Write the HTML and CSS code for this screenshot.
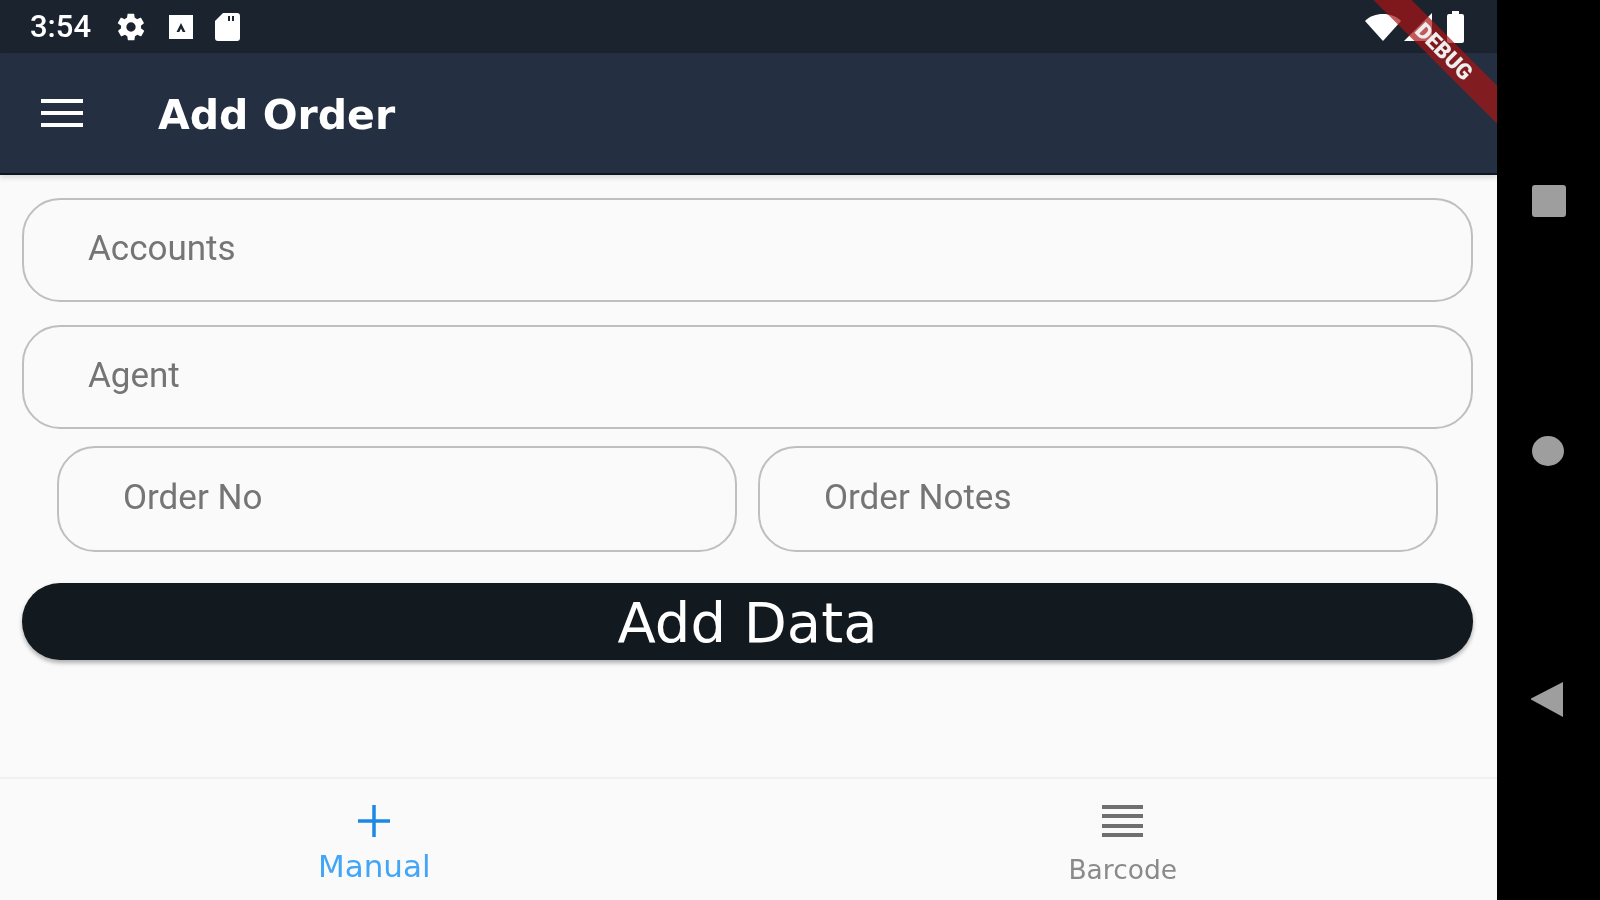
FILE: index.html
```html
<!DOCTYPE html>
<html lang="en">
  <head>
    <meta charset="utf-8">
    <link rel="stylesheet" href="styles.css">
    <title>Add Order</title>
  </head>
  <body>
    <div class="phone">
      <div class="screen">
        <div class="status">
          <span class="status__time">3:54</span>
          <svg class="status__gear" viewBox="0 0 24 24"><path fill="#fff" d="M19.4 13c.1-.3.1-.7.1-1s0-.7-.1-1l2.1-1.6c.2-.2.2-.4.1-.6l-2-3.5c-.1-.2-.4-.3-.6-.2l-2.5 1c-.5-.4-1.100-.7-1.700-1l-.4-2.600c0-.3-.2-.4-.5-.4h-4c-.3 0-.5.100-.5.400l-.4 2.600c-.6.300-1.200.6-1.700 1l-2.500-1c-.2-.1-.5 0-.6.2l-2 3.500c-.1.200-.1.400.1.600L4.600 11c-.1.300-.1.700-.1 1s0 .7.100 1l-2.100 1.600c-.2.200-.2.400-.1.600l2 3.500c.1.200.4.300.6.200l2.500-1c.5.400 1.100.7 1.700 1l.4 2.600c0 .3.200.4.500.4h4c.3 0 .5-.1.500-.4l.4-2.600c.6-.3 1.200-.6 1.700-1l2.500 1c.2.100.5 0 .6-.2l2-3.500c.1-.2.100-.4-.1-.6L19.400 13zM12 15.500a3.500 3.500 0 1 1 0-7 3.500 3.500 0 0 1 0 7z"/></svg>
          <svg class="status__box" viewBox="0 0 26 24"><path fill="#fff" fill-rule="evenodd" d="M1 0h24v24H1zM13 8l-4.500 9h2.800l1.700-3.600 1.700 3.600h2.800z"/></svg>
          <svg class="status__sd" viewBox="0 0 25 28"><path fill="#fff" fill-rule="evenodd" d="M8 0h14a3 3 0 0 1 3 3v22a3 3 0 0 1-3 3H3a3 3 0 0 1-3-3V8zM13 3v5h2V3zM17 3v5h2V3z"/></svg>
          <span class="status__space"></span>
          <svg class="status__wifi" viewBox="0 0 36 28"><path fill="#fff" d="M0 8C5 3 11 1 18 1s13 2 18 7L18 28z"/></svg>
          <svg class="status__signal" viewBox="0 0 28 28"><path fill="#fff" d="M0 28 28 0v28z"/></svg>
          <svg class="status__battery" viewBox="0 0 17 32"><path fill="#fff" d="M5 3V0h7v3h3a2 2 0 0 1 2 2v25a2 2 0 0 1-2 2H2a2 2 0 0 1-2-2V5a2 2 0 0 1 2-2z"/></svg>
        </div>
        <div class="appbar">
          <div class="appbar__menu"><i></i><i></i><i></i></div>
          <div class="appbar__title">Add Order</div>
        </div>
        <div class="form">
          <div class="field">Accounts</div>
          <div class="field">Agent</div>
          <div class="form__row">
            <div class="field">Order No</div>
            <div class="field">Order Notes</div>
          </div>
          <div class="submit">Add Data</div>
        </div>
        <div class="tabs">
          <div class="tab tab--active">
            <svg class="tab__icon" viewBox="0 0 32 32"><path fill="none" stroke="#1e88e5" stroke-width="3.500" d="M16 0v32M0 16h32"/></svg>
            <span class="tab__label">Manual</span>
          </div>
          <div class="tab">
            <svg class="tab__icon" viewBox="0 0 41 32"><path fill="none" stroke="#6f6f6f" stroke-width="4" d="M0 2h41M0 11h41M0 21h41M0 30h41"/></svg>
            <span class="tab__label tab__label--small">Barcode</span>
          </div>
        </div>
        <div class="ribbon"><div class="ribbon__band">DEBUG</div></div>
      </div>
      <div class="softkeys">
        <svg class="softkeys__icon" viewBox="0 0 36 36"><rect x="1" y="1" width="34" height="32" rx="3" fill="#9e9e9e"/></svg>
        <svg class="softkeys__icon" viewBox="0 0 36 36"><ellipse cx="17" cy="18" rx="16" ry="15" fill="#9e9e9e"/></svg>
        <svg class="softkeys__icon" viewBox="1 0 36 36"><path fill="#9e9e9e" d="M0 17 33 0v35z"/></svg>
      </div>
    </div>
  </body>
</html>
```

FILE: styles.css
```css
* { box-sizing: border-box; }

html, body {
  margin: 0;
  height: 100%;
  background: #000;
}

body { font-family: Roboto, sans-serif; }

.phone {
  display: flex;
  height: 900px;
  filter: blur(0.5px);
}

.screen {
  position: relative;
  display: flex;
  flex-direction: column;
  width: 1497px;
  overflow: hidden;
  background: #fafafa;
}

/* status bar */
.status {
  display: flex;
  align-items: center;
  height: 53px;
  padding: 0 33px 0 30px;
  background: #1b232f;
  color: #fff;
}

.status__time {
  width: 62px;
  font-size: 31px;
  font-weight: 500;
  white-space: nowrap;
}

.status__gear { width: 32px; height: 32px; margin-left: 23px; }
.status__box { width: 26px; height: 24px; margin-left: 21px; }
.status__sd { width: 25px; height: 28px; margin-left: 21px; }
.status__space { flex: 1; }
.status__wifi { width: 36px; height: 28px; margin-right: -2px; }
.status__signal { width: 28px; height: 28px; margin-left: 5px; }
.status__battery { width: 17px; height: 32px; margin-left: 15px; }

/* app bar */
.appbar {
  display: flex;
  align-items: center;
  height: 122px;
  padding-left: 41px;
  background: #243042;
  border-bottom: 2px solid #101522;
  box-shadow: 0 3px 5px rgba(0, 0, 0, 0.12);
}

.appbar__menu {
  display: flex;
  flex-direction: column;
  gap: 8px;
  width: 42px;
}

.appbar__menu i {
  display: block;
  height: 4px;
  background: #fff;
}

.appbar__title {
  margin-left: 75px;
  padding-top: 3px;
  font-family: "DejaVu Sans", sans-serif;
  font-size: 41px;
  font-weight: 700;
  color: #fff;
}

/* form */
.form {
  display: flex;
  flex-direction: column;
  flex: 1;
  padding: 23px 24px 0 22px;
}

.field {
  flex: 1;
  display: flex;
  align-items: center;
  min-height: 104px;
  max-height: 104px;
  padding: 0 0 4px 64px;
  margin-bottom: 23px;
  border: 2px solid #bfbfbf;
  border-radius: 38px;
  font-size: 35px;
  color: #757575;
}

.form__row {
  display: flex;
  gap: 21px;
  margin: -6px 35px 0;
}

.form__row .field {
  min-height: 106px;
  max-height: 106px;
  margin-bottom: 0;
}

.submit {
  height: 77px;
  margin-top: 31px;
  border-radius: 38px;
  background: #12191f;
  box-shadow: 0 3px 4px rgba(0, 0, 0, 0.3);
  font-family: "DejaVu Sans", sans-serif;
  font-size: 56px;
  line-height: 79px;
  text-align: center;
  color: #fff;
}

/* bottom tabs */
.tabs {
  display: flex;
  height: 123px;
  border-top: 2px solid #f0f0f0;
}

.tab {
  flex: 1;
  display: flex;
  flex-direction: column;
  align-items: center;
  padding-top: 26px;
}

.tab__icon { height: 32px; }

.tab__label {
  margin-top: 11px;
  font-family: "DejaVu Sans", sans-serif;
  font-size: 31px;
  line-height: 36px;
  color: #42a5f5;
}

.tab__label--small {
  margin-top: 15px;
  font-size: 26.500px;
  color: #8a8a8a;
}

/* debug ribbon */
.ribbon {
  position: absolute;
  top: 0;
  right: 0;
  width: 130px;
  height: 130px;
  overflow: hidden;
}

.ribbon__band {
  position: absolute;
  left: -43px;
  top: 38px;
  width: 240px;
  height: 27px;
  background: rgba(170, 20, 20, 0.7);
  transform: rotate(45deg);
  font-size: 22px;
  font-weight: 900;
  line-height: 27px;
  text-align: center;
  color: #eee;
}

/* android soft keys */
.softkeys {
  flex: 1;
  display: flex;
  flex-direction: column;
  justify-content: space-between;
  align-items: center;
  padding-top: 184px;
  height: 718px;
  background: #000;
}

.softkeys__icon { width: 36px; height: 36px; }
```
